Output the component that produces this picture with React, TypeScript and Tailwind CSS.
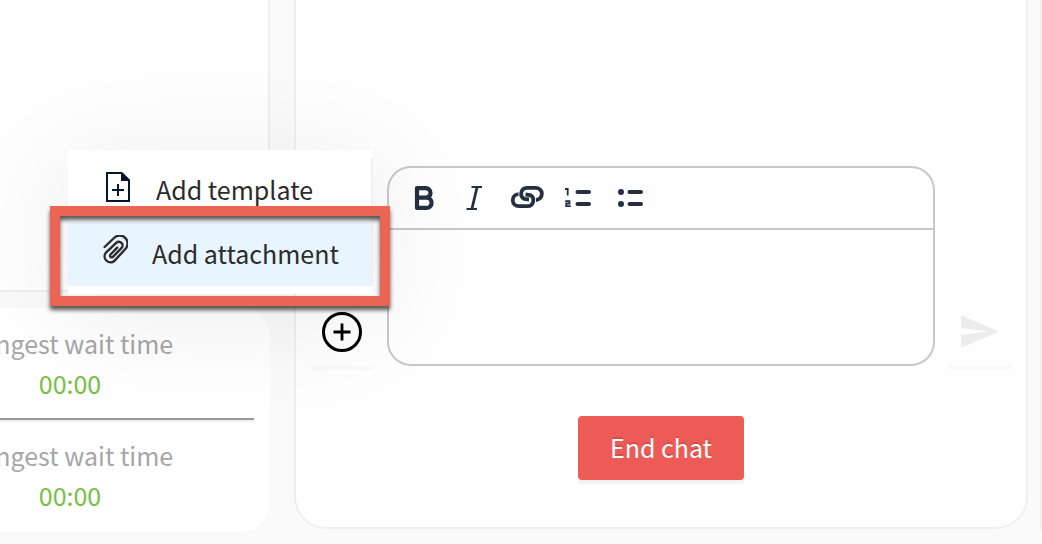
import { useState } from "react";
import type { ReactNode } from "react";

interface Stat {
  label: string;
  value: string;
}

const STATS: Stat[] = [
  { label: "Longest wait time", value: "00:00" },
  { label: "Longest wait time", value: "00:00" },
];

function BoldIcon() {
  return (
    <svg width="36" height="32" viewBox="0 0 36 32" fill="none" stroke="currentColor">
      <path
        d="M12 15.700h9.500a5 5 0 0 1 0 10.200H12V6.100h8.700a4.800 4.800 0 0 1 0 9.600"
        strokeWidth="4.200"
        strokeLinejoin="round"
      />
    </svg>
  );
}

function ItalicIcon() {
  return (
    <svg width="36" height="32" viewBox="0 0 36 32" fill="none" stroke="currentColor">
      <path d="M14.500 5h10.500M9.500 27h10.500" strokeWidth="1.800" />
      <path d="M20.100 5l-5.200 22" strokeWidth="2.800" />
    </svg>
  );
}

function LinkIcon() {
  return (
    <svg
      width="36"
      height="32"
      viewBox="0 0 36 32"
      fill="none"
      stroke="currentColor"
      strokeWidth="3.800"
    >
      <path d="M9.500 12.200A6 6 0 0 0 10 24.200h8.500a5.900 5.900 0 0 0 2.500-11.200L16.500 12.500" />
      <path d="M27 18A6 6 0 0 0 26.500 5.800h-8.500a5.900 5.900 0 0 0-2.500 11.200L20 17.500" />
    </svg>
  );
}

function OrderedListIcon() {
  return (
    <svg width="36" height="32" viewBox="0 0 36 32" fill="none" stroke="currentColor">
      <path d="M16.500 10h11.500M16.500 22h11.500" strokeWidth="4" strokeLinecap="round" />
      <path d="M4 7h2.700v6.500M4.200 19.200h4.300v2.300h-3.300v2.600h4.500" strokeWidth="1.800" />
    </svg>
  );
}

function BulletListIcon() {
  return (
    <svg width="36" height="32" viewBox="0 0 36 32" fill="currentColor" stroke="currentColor">
      <path d="M16.500 10h11.500M16.500 22h11.500" strokeWidth="4" strokeLinecap="round" />
      <circle cx="8" cy="10" r="3" stroke="none" />
      <circle cx="8" cy="22" r="3" stroke="none" />
    </svg>
  );
}

function TemplateIcon() {
  return (
    <svg width="29" height="32" viewBox="0 0 29 32" fill="none" className="-mt-1.5 text-[#06172b]">
      <path d="M4 2h14.500l7.500 7.500V30H4z" stroke="currentColor" strokeWidth="2" />
      <path d="M18 1h1l8 8v1h-9z" fill="currentColor" />
      <path d="M15 13v12M9 19h12" stroke="currentColor" strokeWidth="2" />
    </svg>
  );
}

function PaperclipIcon() {
  return (
    <svg
      width="25"
      height="32"
      viewBox="1 1 25 32"
      fill="none"
      stroke="currentColor"
      strokeWidth="2.400"
      strokeLinecap="round"
      className="-mt-1.5"
    >
      <path d="M2.600 13L12 4A7.900 7.900 0 0 1 23.400 15L12.200 27A5.900 5.900 0 0 1 4 18.600L14.200 8.800A3.700 3.700 0 0 1 19.400 14.200L10.900 22.900A1.500 1.500 0 0 1 8.500 20.500L15.200 13.600" />
    </svg>
  );
}

interface ToolButtonProps {
  label: string;
  children: ReactNode;
}

function ToolButton({ label, children }: ToolButtonProps) {
  return (
    <button
      type="button"
      aria-label={label}
      className="flex h-full w-[52px] items-center justify-center text-[#242f3f]"
    >
      {children}
    </button>
  );
}

function Sidebar() {
  return (
    <aside className="-ml-[130px] flex w-[400px] shrink-0 flex-col gap-4 pb-3">
      <div className="flex-1 border-r-2 border-b-2 border-[#efefef] bg-[#fefefe]" />
      <section className="rounded-[30px] bg-white px-4 pt-[15px] pb-[17px] text-center">
        {STATS.map((stat, i) => (
          <div key={i}>
            {i > 0 && (
              <hr className="my-[15px] h-0.5 border-0 bg-[#999] shadow-[0_2px_0_#eee]" />
            )}
            <p className="leading-10 text-[#a6a6a6]">{stat.label}</p>
            <p className="leading-10 text-[#76c043]">{stat.value}</p>
          </div>
        ))}
      </section>
    </aside>
  );
}

function AddMenu() {
  return (
    <div className="absolute right-px bottom-[72px] z-10 w-[305px] bg-white py-2 whitespace-nowrap text-[#2b2b2b] shadow-[0_20px_110px_10px_rgba(0,0,0,0.065)]">
      <button
        type="button"
        className="flex h-16 w-full items-center gap-6 border-r-2 border-[#f1f1f1] pl-[35px]"
      >
        <TemplateIcon />
        Add template
      </button>
      <div className="relative">
        <button
          type="button"
          className="flex h-16 w-full items-center gap-6 border-r-2 border-[#eaf0f4] bg-[#e8f5fe] pl-[35px]"
        >
          <PaperclipIcon />
          Add attachment
        </button>
        {/* Highlight around the active entry */}
        <div className="pointer-events-none absolute -top-4 -right-[17px] -bottom-5 -left-[18px] border-10 border-[#ec6553] drop-shadow-[0_4px_2px_rgba(0,0,0,0.65)]" />
      </div>
    </div>
  );
}

function Editor() {
  const [message, setMessage] = useState("");

  return (
    <div className="flex h-[200px] min-w-0 flex-1 flex-col overflow-hidden rounded-[24px] border-2 border-[#c8c8c8]">
      <div className="flex h-[62px] shrink-0 border-b-2 border-[#c8c8c8] pl-2">
        <ToolButton label="Bold">
          <BoldIcon />
        </ToolButton>
        <ToolButton label="Italic">
          <ItalicIcon />
        </ToolButton>
        <ToolButton label="Insert link">
          <LinkIcon />
        </ToolButton>
        <ToolButton label="Numbered list">
          <OrderedListIcon />
        </ToolButton>
        <ToolButton label="Bulleted list">
          <BulletListIcon />
        </ToolButton>
      </div>
      <textarea
        aria-label="Message"
        value={message}
        onChange={(e) => setMessage(e.target.value)}
        className="flex-1 resize-none bg-transparent px-6 py-3 outline-none"
      />
    </div>
  );
}

export default function App() {
  const [menuOpen, setMenuOpen] = useState(true);

  return (
    <div className="flex h-screen overflow-hidden bg-[#fafafa] font-['Noto_Sans_CJK_SC',sans-serif] text-[25px]">
      <Sidebar />

      <main className="min-w-0 flex-1 pr-3 pb-[15px] pl-6">
        <div className="flex h-full flex-col justify-end rounded-b-[32px] border-x-2 border-b-2 border-[#efefef] bg-[#fefefe] px-3.5 pb-[47px]">
          <div className="flex items-end gap-[13px]">
            <div className="relative shrink-0">
              {menuOpen && <AddMenu />}
              <button
                type="button"
                aria-label="Add"
                aria-expanded={menuOpen}
                onClick={() => setMenuOpen(!menuOpen)}
                className="flex h-[68px] w-16 items-center justify-center rounded bg-[#fefefe] text-black shadow-[0_4px_0_#f9f9f9]"
              >
                <svg width="40" height="40" viewBox="0 0 40 40" fill="none" stroke="currentColor">
                  <circle cx="20" cy="20" r="18.500" strokeWidth="3" />
                  <path d="M20 11.500v17M11.500 20h17" strokeWidth="2.800" />
                </svg>
              </button>
            </div>

            <Editor />

            <button
              type="button"
              aria-label="Send"
              className="flex h-[68px] w-16 shrink-0 items-center justify-center rounded bg-[#fefefe] pb-0.5 text-[#ececec] shadow-[0_4px_0_#f9f9f9]"
            >
              <svg width="38" height="33" viewBox="2 3 21 18" fill="currentColor">
                <path d="M2.010 21L23 12 2.010 3 2 10l15 2-15 2z" />
              </svg>
            </button>
          </div>

          <button
            type="button"
            className="mt-[50px] h-16 self-center rounded bg-[#ed5b57] px-8 text-white shadow-[0_4px_0_#f3f3f3] text-shadow-[0_-2px_0_rgba(0,0,0,0.12)]"
          >
            End chat
          </button>
        </div>
      </main>

      <div className="w-0.5 shrink-0 pb-[15px]">
        <div className="h-full bg-[#efefef]" />
      </div>
    </div>
  );
}
